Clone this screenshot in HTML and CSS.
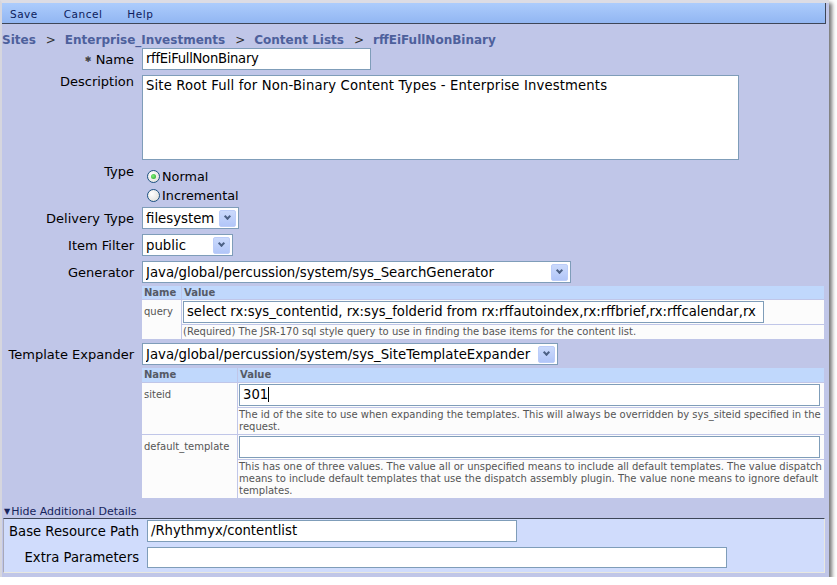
FILE: index.html
```html
<!DOCTYPE html>
<html>
<head>
<meta charset="utf-8">
<link rel="stylesheet" href="styles.css">
</head>
<body>
<div class="window">
  <div class="menubar">
    <span class="menu-item">Save</span>
    <span class="menu-item">Cancel</span>
    <span class="menu-item">Help</span>
  </div>
  <div class="crumbs">
    <span class="crumb">Sites</span><span class="sep">&gt;</span><span class="crumb">Enterprise_Investments</span><span class="sep">&gt;</span><span class="crumb">Content Lists</span><span class="sep">&gt;</span><span class="crumb">rffEiFullNonBinary</span>
  </div>
  <div class="form">
    <div class="row mid row-name">
      <div class="label"><span class="req">&#x2731;</span> Name</div>
      <div class="field"><div class="input w-name">rffEiFullNonBinary</div></div>
    </div>
    <div class="row row-desc">
      <div class="label">Description</div>
      <div class="field"><div class="input textarea">Site Root Full for Non-Binary Content Types - Enterprise Investments</div></div>
    </div>
    <div class="row row-type">
      <div class="label">Type</div>
      <div class="field radios">
        <div class="radio-line"><span class="radio checked"></span>Normal</div>
        <div class="radio-line"><span class="radio"></span>Incremental</div>
      </div>
    </div>
    <div class="row mid row-delivery">
      <div class="label">Delivery Type</div>
      <div class="field"><div class="select w-delivery"><span class="sel-text">filesystem</span><span class="arrow"></span></div></div>
    </div>
    <div class="row mid row-filter">
      <div class="label">Item Filter</div>
      <div class="field"><div class="select w-filter h21"><span class="sel-text">public</span><span class="arrow"></span></div></div>
    </div>
    <div class="row mid row-gen">
      <div class="label">Generator</div>
      <div class="field"><div class="select w-gen"><span class="sel-text">Java/global/percussion/system/sys_SearchGenerator</span><span class="arrow"></span></div></div>
    </div>
    <div class="row row-t1">
      <div class="label"></div>
      <div class="field">
        <table class="params t1">
          <tr class="head"><th class="c-name1">Name</th><th>Value</th></tr>
          <tr class="val"><td class="pname" rowspan="2">query</td><td class="pval"><div class="input cell-input w-query">select rx:sys_contentid, rx:sys_folderid from rx:rffautoindex,rx:rffbrief,rx:rffcalendar,rx</div></td></tr>
          <tr><td class="help">(Required) The JSR-170 sql style query to use in finding the base items for the content list.</td></tr>
        </table>
      </div>
    </div>
    <div class="row mid row-te">
      <div class="label">Template Expander</div>
      <div class="field"><div class="select w-te h21"><span class="sel-text">Java/global/percussion/system/sys_SiteTemplateExpander</span><span class="arrow"></span></div></div>
    </div>
    <div class="row row-t2">
      <div class="label"></div>
      <div class="field">
        <table class="params t2">
          <tr class="head"><th class="c-name2">Name</th><th>Value</th></tr>
          <tr class="val"><td class="pname" rowspan="2">siteid</td><td class="pval"><div class="input cell-input wide">301<span class="caret"></span></div></td></tr>
          <tr><td class="help">The id of the site to use when expanding the templates. This will always be overridden by sys_siteid specified in the request.</td></tr>
          <tr class="val"><td class="pname" rowspan="2">default_template</td><td class="pval"><div class="input cell-input wide"></div></td></tr>
          <tr><td class="help">This has one of three values. The value all or unspecified means to include all default templates. The value dispatch means to include default templates that use the dispatch assembly plugin. The value none means to ignore default templates.</td></tr>
        </table>
      </div>
    </div>
  </div>
  <div class="toggle"><span class="tri">&#x25BC;</span>Hide Additional Details</div>
  <div class="details">
    <div class="row mid drow">
      <div class="label dlabel">Base Resource Path</div>
      <div class="field"><div class="input w-base">/Rhythmyx/contentlist</div></div>
    </div>
    <div class="row mid drow">
      <div class="label dlabel">Extra Parameters</div>
      <div class="field"><div class="input w-extra h21"></div></div>
    </div>
  </div>
</div>
</body>
</html>
```
FILE: styles.css
```css
html, body {
  margin: 0;
  padding: 0;
  background: #ffffff;
}
body {
  font-family: "DejaVu Sans", Verdana, sans-serif;
  font-size: 13px;
  color: #000;
}
.window {
  width: 827px;
  height: 574px;
  background: #c0c6e8;
  border-left: 2px solid #d6d6de;
  border-top: 3px solid #dcdce4;
  box-shadow: 3px 3px 4px rgba(0,0,0,0.55);
  position: relative;
  overflow: hidden;
}
.menubar {
  width: 823px;
  background: linear-gradient(#acccfc, #92b6f2);
  border-bottom: 1px solid #3e4658;
  border-right: 1px solid #3e4658;
  display: flex;
  align-items: center;
  padding-top: 1px;
  box-sizing: content-box;
  height: 19px;
  font-size: 10.5px;
  letter-spacing: 0.5px;
  color: #0c1c5c;
}
.menu-item { margin-left: 8px; margin-right: 17px; }
.menu-item:first-child { margin-left: 8px; margin-right: 18px; }
.crumbs {
  height: 24px;
  box-sizing: border-box;
  padding-top: 9px;
  line-height: 14px;
  display: flex;
  padding-left: 0;
  font-size: 12px;
  color: #4d609c;
  white-space: nowrap;
}
.crumb { font-weight: bold; }
.sep { color: #333; margin: 0 9px 0 10px; font-weight: normal; }
.form {
  display: flex;
  flex-direction: column;
}
.row {
  display: flex;
  align-items: flex-start;
}
.row.mid { align-items: center; }
.label {
  width: 132px;
  flex: none;
  text-align: right;
  padding-right: 8px;
  line-height: 13px;
  white-space: nowrap;
}
.req { font-size: 8px; color: #444; vertical-align: 2px; }
.field { flex: 1; min-width: 0; }
.input {
  box-sizing: border-box;
  background: #fff;
  border: 1px solid #7f9db9;
  height: 22px;
  line-height: 18px;
  padding: 1px 3px;
  font-size: 13.2px;
  white-space: nowrap;
  overflow: hidden;
}
.h21 { height: 21px; }
.w-name { width: 229px; letter-spacing: -0.3px; }
.textarea { width: 597px; height: 85px; white-space: normal; letter-spacing: 0.16px; padding-top: 1px; }
.row-name { margin-top: 0; }
.row-desc { margin-top: 5px; }
.row-type { margin-top: 5px; }
.radios { padding-top: 2px; font-size: 12.8px; }
.radio-line { display: flex; align-items: center; height: 19px; margin-left: 5px; }
.radio {
  width: 11px;
  height: 11px;
  border: 1px solid #1c5180;
  border-radius: 50%;
  background: radial-gradient(circle at 35% 35%, #fff, #dcdcd6);
  margin-right: 2px;
  position: relative;
  box-sizing: content-box;
}
.radio.checked::after {
  content: "";
  position: absolute;
  left: 3px; top: 3px;
  width: 5px; height: 5px;
  border-radius: 50%;
  background: radial-gradient(circle at 40% 40%, #7ef07a, #21a121);
}
.row-delivery { margin-top: 2px; }
.row-filter { margin-top: 5px; }
.row-gen { margin-top: 5px; }
.select {
  box-sizing: border-box;
  height: 22px;
  border: 1px solid #7f9db9;
  background: #fff;
  display: flex;
  align-items: center;
  font-size: 13.3px;
  padding-left: 3px;
  padding-right: 2px;
}
.sel-text { flex: 1; white-space: nowrap; overflow: hidden; }
.arrow {
  width: 15px;
  height: 15px;
  border: 1px solid #bccdf9;
  border-radius: 2px;
  background: linear-gradient(#cbdafc, #b2c6f8);
  position: relative;
  flex: none;
}
.arrow::after {
  content: "";
  position: absolute;
  left: 5px; top: 3px;
  width: 3px; height: 3px;
  border-right: 2px solid #4d6185;
  border-bottom: 2px solid #4d6185;
  transform: rotate(45deg);
}
.w-delivery { width: 97px; }
.w-filter { width: 91px; }
.w-gen { width: 429px; }
.w-te { width: 416px; }
.row-t1 { margin-top: 2px; }
.row-te { margin-top: 3px; }
.row-t2 { margin-top: 2px; }
.params {
  border-collapse: separate;
  border-spacing: 1px;
  background: #c0c6e8;
  width: 684px;
  margin-left: -1px;
}
.params th {
  background: #c0d8fc;
  color: #555a66;
  font-size: 10px;
  font-weight: bold;
  text-align: left;
  height: 13px;
  line-height: 13px;
  padding: 0 2px;
}
.t2 th { height: 14px; line-height: 14px; }
.params td {
  background: #fcfcfc;
  vertical-align: top;
  padding: 0;
}
.pname {
  font-size: 10px;
  line-height: 12px;
  color: #555;
  padding: 6px 1px 0 2px !important;
}
.pval { padding: 1px 4px 1px 1px !important; }
.cell-input { height: 22px; }
.w-query { width: 581px; }
.wide { width: 581px; }
.c-name1 { width: 35px; }
.c-name2 { width: 92px; }
.help {
  font-size: 10px;
  color: #555;
  line-height: 12px;
  padding: 1px 1px 1px 1px !important;
}
.caret {
  display: inline-block;
  width: 1px;
  height: 15px;
  background: #000;
  vertical-align: -3px;
}
.toggle {
  margin-top: 6px;
  margin-left: 2px;
  font-size: 11px;
  color: #16245c;
  height: 13px;
  line-height: 13px;
  white-space: nowrap;
}
.tri { font-size: 8px; margin-right: 1px; vertical-align: 1px; }
.details {
  width: 822px;
  margin-left: 1px;
  background: #d0dcfc;
  border-top: 1px solid #3e4658;
  border-left: 1px solid #a8a8b8;
  border-bottom: 1px solid #e8e8e0;
  border-right: 1px solid #e8e8e0;
  padding: 1px 0 4px 0;
  box-sizing: border-box;
}
.drow { margin-bottom: 5px; }
.drow:last-child { margin-bottom: 0; }
.dlabel { width: 135px; padding-right: 8px; font-size: 13.2px; }
.w-base { width: 370px; }
.w-extra { width: 580px; }
```
